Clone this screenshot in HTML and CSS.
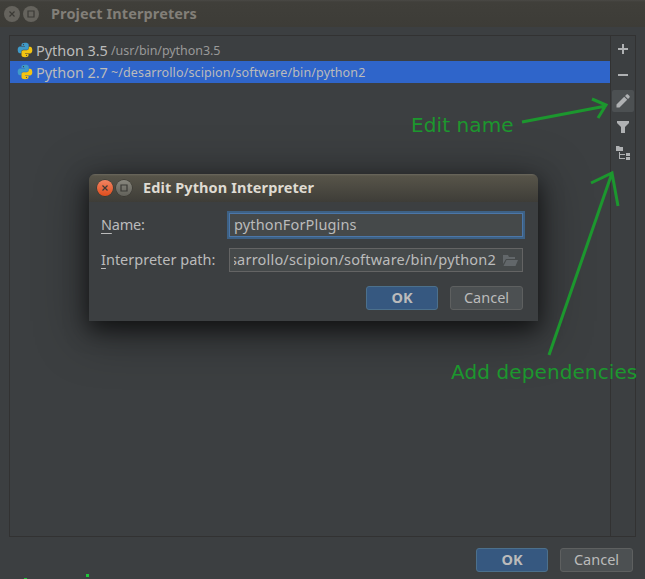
FILE: index.html
```html
<!DOCTYPE html>
<html lang="en">
<head>
<meta charset="utf-8">
<title>Project Interpreters</title>
<link rel="stylesheet" href="styles.css">
</head>
<body>
<svg class="defs" width="0" height="0">
  <symbol id="python" viewBox="0 0 16 16">
    <path fill="#3f9ac9" d="M4.500 4V2.500C4.500 1.500 6 .8 8 .8s3.700.6 3.700 1.900V6c0 1-.8 1.800-1.800 1.800H6.300C5 7.800 4.300 8.800 4.300 10v1.300H3C1.300 11.300.7 9.700.7 7.800S1.500 4.500 3 4.500h5V4z"/>
    <path fill="#f3c411" d="M11.500 12v1.500c0 1-1.500 1.700-3.500 1.700s-3.500-.6-3.500-1.900V10c0-1 .8-1.800 1.800-1.800h3.400c1.300 0 2.200-1 2.200-2.200V4.700H13c1.700 0 2.300 1.600 2.300 3.500s-.8 3.300-2.300 3.300H8v.5z"/>
    <circle cx="6.500" cy="2.700" r=".6" fill="#3c3f41"/><circle cx="9.500" cy="13.300" r=".6" fill="#3c3f41"/>
  </symbol>
</svg>
<div class="window">
  <header class="titlebar">
    <span class="knob"><svg width="16" height="16"><path d="M5.500 5.500l5 5m0-5l-5 5"/></svg></span>
    <span class="knob"><svg width="16" height="16"><path d="M5 5h6v6H5z"/></svg></span>
    <h1 class="t-main">Project Interpreters</h1>
  </header>
  <main class="panel">
    <ul class="list">
      <li><svg class="py" width="16" height="16"><use href="#python"/></svg><span class="ver">Python 3.5</span><span class="path p35">/usr/bin/python3.5</span></li>
      <li class="selected"><svg class="py" width="16" height="16"><use href="#python"/></svg><span class="ver">Python 2.7</span><span class="path p27">~/desarrollo/scipion/software/bin/python2</span></li>
    </ul>
    <nav class="tools">
      <button><svg width="16" height="16"><path d="M7 3h2v4h4v2H9v4H7V9H3V7h4z"/></svg></button>
      <button><svg width="16" height="16"><path d="M3 7h10v2H3z"/></svg></button>
      <button class="active"><svg width="16" height="16"><path d="M1.500 14.500v-3l7.700-7.700 3 3-7.700 7.700zM10 3l1.300-1.300c.6-.6 1.300-.6 1.900 0l1.100 1.100c.6.6.6 1.300 0 1.900L13 6z"/></svg></button>
      <button><svg width="16" height="16"><path d="M2 2h12v2L10 8v6H6V8L2 4z"/></svg></button>
      <button><svg width="16" height="16"><path d="M1 1h3l1 1h3v4H1zM4 7h1v2h5v1H5v3h5v1H4zM11 8h4v3h-4zM11 12h4v3h-4z"/></svg></button>
    </nav>
  </main>
  <footer class="actions"><button class="btn primary">OK</button><button class="btn">Cancel</button></footer>
</div>

<section class="dialog">
  <header class="titlebar">
    <span class="knob close"><svg width="16" height="16"><path d="M5.500 5.500l5 5m0-5l-5 5"/></svg></span>
    <span class="knob"><svg width="16" height="16"><path d="M5 5h6v6H5z"/></svg></span>
    <h2 class="t-dialog">Edit Python Interpreter</h2>
  </header>
  <div class="form">
    <label class="l-name"><u>N</u>ame:</label>
    <div class="field focused"><span class="value v-name">pythonForPlugins</span></div>
    <label class="l-path"><u>I</u>nterpreter path:</label>
    <div class="field"><span class="value clip"><span class="v-path">sarrollo/scipion/software/bin/python2</span></span>
      <svg class="folder" width="16" height="12"><path d="M1 10V1h5l1 2h6v2H4z"/><path d="M4.500 6H16l-2.500 6H1.500z"/></svg>
    </div>
  </div>
  <footer class="actions"><button class="btn primary">OK</button><button class="btn">Cancel</button></footer>
</section>

<span class="note n-edit">Edit name</span>
<span class="note n-add">Add dependencies</span>
<svg class="marks" width="645" height="579">
  <path d="M522 122L606 106M592 99l14 6-8 13M549 355L612 173M591 183l21-10 6 33"/>
  <path class="dot" d="M86 574h3v3h-3zM24 578h3v1h-3z"/>
</svg>
</body>
</html>
```
FILE: styles.css
```css
* { box-sizing: border-box; }
body {
  margin: 0;
  width: 645px;
  height: 579px;
  overflow: hidden;
  background: #3c3f41;
  color: #bbb;
  font: 14.500px/22px "Noto Sans", sans-serif;
}
.defs { position: absolute; }
svg { display: block; flex: none; }
button { border: 0; padding: 0; background: none; color: inherit; font: inherit; }
h1, h2 { margin: 0; font-size: 14.500px; line-height: 26px; white-space: nowrap; }

.window { display: flex; flex-direction: column; height: 579px; }
.titlebar {
  display: flex;
  align-items: center;
  gap: 3px;
  height: 27px;
  padding-left: 5px;
  background: linear-gradient(#4a4945 0, #403f3a 2px, #3d3c37 100%);
  color: #827f78;
}
.titlebar h1, .titlebar h2 { padding-bottom: 1px; line-height: 25px; }
.titlebar h1 { margin-left: 9px; letter-spacing: .1px; }
.titlebar h2 { margin-left: 8px; letter-spacing: .1px; }
.window .titlebar { padding-left: 4px; }
.knob { width: 16px; height: 16px; border-radius: 50%; background: #65635d; }
.knob path { fill: none; stroke: #3b3a36; stroke-width: 1.200; }

.panel {
  display: flex;
  width: 627px;
  height: 502px;
  margin: 8px 0 0 9px;
  border: 1px solid #323232;
}
.list { flex: 1; margin: 0; padding: 3px 0 0; list-style: none; }
.list li { display: flex; align-items: center; height: 22px; padding-left: 7px; white-space: nowrap; }
.list .selected { background: #2f65ca; }
.py { margin-right: 3px; }
.ver { width: 75px; letter-spacing: -.05px; }
.path { font-size: 12.500px; color: #999; line-height: 22px; padding-top: 2px; }
.p35 { letter-spacing: -.06px; }
.p27 { letter-spacing: .12px; }
.selected .path { color: #bbb; }
.tools {
  display: flex;
  flex-direction: column;
  align-items: center;
  gap: 4px;
  width: 25px;
  padding-top: 2px;
  border-left: 1px solid #323232;
}
.tools button { display: flex; align-items: center; justify-content: center; width: 22px; height: 22px; border-radius: 2px; }
.tools .active { background: #4c5052; }
.tools path { fill: #afb1b3; }

.actions { display: flex; justify-content: flex-end; gap: 12px; }
.window .actions { margin: 11px 12px 0 0; }
.btn {
  width: 73px;
  height: 24px;
  padding-bottom: 2px;
  border: 1px solid #5e6060;
  border-radius: 3px;
  background: #4c5052;
  line-height: 20px;
}
.btn.primary { width: 72px; border-color: #4c708c; background: #365880; font-weight: 700; }

.dialog {
  position: absolute;
  left: 89px;
  top: 174px;
  width: 449px;
  height: 147px;
  border-radius: 6px 6px 0 0;
  background: #3c3f41;
  box-shadow: 0 8px 22px 0 rgba(0, 0, 0, .6), 0 10px 48px 6px rgba(0, 0, 0, .35);
}
.dialog .titlebar {
  height: 28px;
  padding-left: 8px;
  border-radius: 6px 6px 0 0;
  background: linear-gradient(#6b685e 0, #575449 2px, #3e3d38 100%);
  color: #dfdbd2;
}
.dialog .knob { background: linear-gradient(#88877e, #62615a); box-shadow: 0 0 0 .5px #33322e; }
.dialog .knob.close { background: linear-gradient(#f28462, #df4d1d); }
.form { display: grid; grid-template-columns: 128px 294px; row-gap: 11px; padding: 11px 0 0 12px; }
.form label { line-height: 22px; white-space: nowrap; }
.l-name { letter-spacing: -.2px; }
.form u { text-underline-offset: 3px; text-decoration-thickness: 1px; }
.field {
  display: flex;
  align-items: center;
  height: 24px;
  padding: 0 4px;
  border: 1px solid #646464;
  background: #45494a;
}
.field.focused { border-color: #4b76a8; outline: 2px solid #3d6185; }
.value { white-space: nowrap; line-height: 20px; padding-bottom: 2px; }
.v-name { letter-spacing: .15px; }
.v-path { letter-spacing: .2px; }
.clip { display: flex; justify-content: flex-end; width: 262px; overflow: hidden; padding-bottom: 2px; }
.folder { margin-left: 6px; }
.folder path { fill: #62676a; }
.dialog .actions { margin: 14px 15px 0 0; }

.note { position: absolute; color: #1c972e; font: 20px/24px "DejaVu Sans", sans-serif; letter-spacing: .1px; white-space: nowrap; }
.n-edit { left: 411px; top: 113px; }
.n-add { left: 451px; top: 360px; }
.marks { position: absolute; left: 0; top: 0; pointer-events: none; }
.marks path { fill: none; stroke: #1c972e; stroke-width: 3; }
.marks .dot { fill: #1ec739; stroke: none; }
```
